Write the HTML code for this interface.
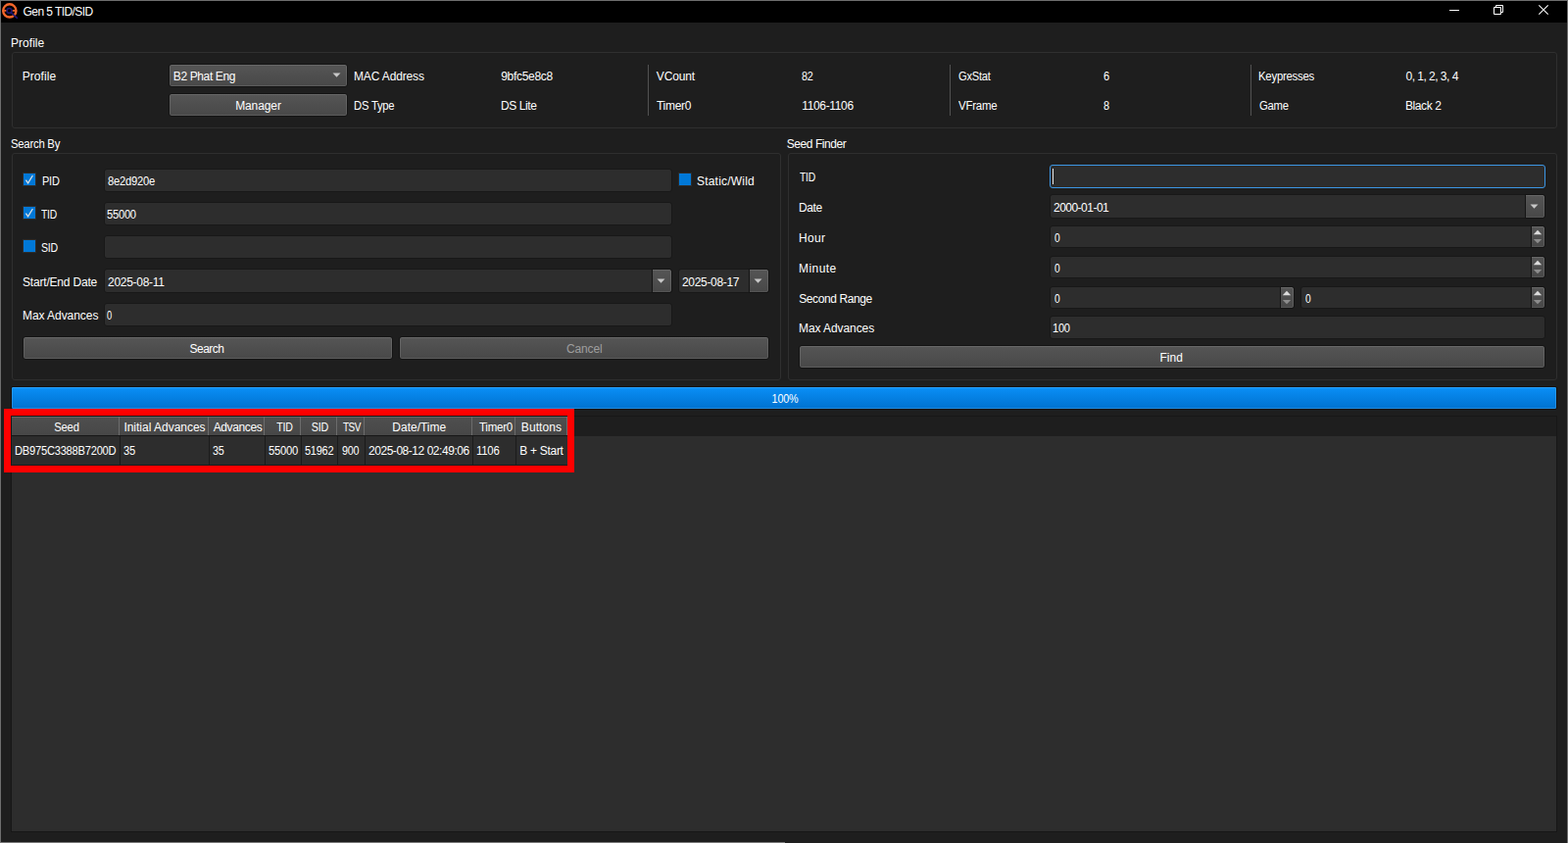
<!DOCTYPE html>
<html lang="en">
<head>
<meta charset="utf-8">
<title>Gen 5 TID/SID</title>
<style>
html,body{margin:0;padding:0;}
body{width:1600px;height:860px;overflow:hidden;background:#1e1e1e;position:relative;
  font-family:"Liberation Sans",sans-serif;font-size:12px;color:#fff;}
#win{position:absolute;left:0;top:0;width:1600px;height:860px;box-sizing:border-box;
  border:1px solid #6e6e6e;border-bottom:none;background:#1e1e1e;}
#titlebar{position:absolute;left:1px;top:1px;width:1598px;height:22px;background:#000;}
.t{position:absolute;height:16px;line-height:16px;white-space:nowrap;margin:0;padding:0;}
.c{text-align:center;}
.grp{position:absolute;box-sizing:border-box;border:1px solid #2f2f2f;border-radius:3px;}
.btn{position:absolute;box-sizing:border-box;height:24px;border:1px solid #141414;border-radius:3px;
  background:linear-gradient(#555555,#484848);box-shadow:inset 0 0 0 1px rgba(255,255,255,0.11);}
.edit{position:absolute;box-sizing:border-box;height:24px;border:1px solid #181818;border-radius:3px;
  background:#2d2d2d;}
.vl{position:absolute;width:1px;background:#525252;}
.cb{position:absolute;box-sizing:border-box;width:14px;height:14px;border:1px solid #2c2c2c;background:#0078d7;}
.sub{position:absolute;box-sizing:border-box;border:1px solid #141414;
  background:linear-gradient(#555555,#484848);box-shadow:inset -1px 0 0 rgba(255,255,255,0.11),inset 0 1px 0 rgba(255,255,255,0.11),inset 0 -1px 0 rgba(255,255,255,0.07);}
svg{position:absolute;overflow:visible;}
</style>
</head>
<body>
<div id="win"></div>
<div id="titlebar"></div>
<div style="position:absolute;left:0;top:859px;width:801px;height:1px;background:#777"></div>

<!-- app icon -->
<svg style="left:1px;top:2px" width="18" height="18" viewBox="0 0 18 18">
  <circle cx="8.8" cy="8.9" r="6.6" fill="none" stroke="#f4652a" stroke-width="2.4"/>
  <path d="M3.2 8.9h2.4M11.6 8.9h2.6" stroke="#f4652a" stroke-width="1.6"/>
  <circle cx="8.5" cy="8.9" r="2.4" fill="none" stroke="#1f1670" stroke-width="1.5"/>
  <path d="M10.4 10.8L16.4 16.3" stroke="#1f1670" stroke-width="1.7" stroke-linecap="round"/>
</svg>
<div class="t" style="left:23.5px;top:4px;letter-spacing:-0.56px">Gen 5 TID/SID</div>

<!-- window controls -->
<svg style="left:1474px;top:1px" width="120" height="22" viewBox="0 0 120 22">
  <path d="M5 9.5h10" stroke="#fff" stroke-width="1"/>
  <path d="M50.5 6.5h7v7h-7zM52.5 6.5v-2h7v7h-2" fill="none" stroke="#fff" stroke-width="1"/>
  <path d="M96.3 4.3l9.4 9.4M105.7 4.3l-9.4 9.4" stroke="#fff" stroke-width="1.1"/>
</svg>

<!-- Profile group -->
<div class="t" style="left:11px;top:36px;letter-spacing:0.04px">Profile</div>
<div class="grp" style="left:12px;top:53px;width:1577px;height:78px"></div>
<div class="t" style="left:22.75px;top:70px;letter-spacing:0.05px">Profile</div>
<div class="btn" style="left:172px;top:65px;width:183px"></div>
<div class="t" style="left:176.75px;top:70px;letter-spacing:-0.37px">B2 Phat Eng</div>
<svg style="left:339px;top:74px" width="9" height="5" viewBox="0 0 9 5"><path d="M0.5 0.5h8L4.5 4.7z" fill="#c8c8c8"/></svg>
<div class="btn" style="left:172px;top:95px;width:183px"></div>
<div class="t c" style="left:172px;top:100px;width:183px;letter-spacing:-0.09px">Manager</div>
<div class="t" style="left:361px;top:70px;letter-spacing:-0.14px">MAC Address</div>
<div class="t" style="left:361px;top:100px;letter-spacing:-0.25px;transform-origin:0 0;transform:scaleX(0.939)">DS Type</div>
<div class="t" style="left:511.25px;top:70px;letter-spacing:-0.31px">9bfc5e8c8</div>
<div class="t" style="left:511px;top:100px;letter-spacing:-0.41px">DS Lite</div>
<div class="vl" style="left:661px;top:66px;height:52px"></div>
<div class="t" style="left:669.75px;top:70px;letter-spacing:-0.12px">VCount</div>
<div class="t" style="left:670px;top:100px;letter-spacing:-0.30px">Timer0</div>
<div class="t" style="left:818.25px;top:70px;letter-spacing:-0.25px;transform-origin:0 0;transform:scaleX(0.900)">82</div>
<div class="t" style="left:818.25px;top:100px;letter-spacing:-0.35px">1106-1106</div>
<div class="vl" style="left:969px;top:66px;height:52px"></div>
<div class="t" style="left:977.5px;top:70px;letter-spacing:-0.25px;transform-origin:0 0;transform:scaleX(0.929)">GxStat</div>
<div class="t" style="left:978px;top:100px;letter-spacing:-0.25px;transform-origin:0 0;transform:scaleX(0.956)">VFrame</div>
<div class="t" style="left:1126.25px;top:70px;transform-origin:0 0;transform:scaleX(0.921)">6</div>
<div class="t" style="left:1126px;top:100px;transform-origin:0 0;transform:scaleX(0.911)">8</div>
<div class="vl" style="left:1276px;top:66px;height:52px"></div>
<div class="t" style="left:1284.25px;top:70px;letter-spacing:-0.25px;transform-origin:0 0;transform:scaleX(0.948)">Keypresses</div>
<div class="t" style="left:1284.5px;top:100px;letter-spacing:-0.25px;transform-origin:0 0;transform:scaleX(0.941)">Game</div>
<div class="t" style="left:1434.5px;top:70px;letter-spacing:-0.52px">0, 1, 2, 3, 4</div>
<div class="t" style="left:1434px;top:100px;letter-spacing:-0.41px">Black 2</div>

<!-- Search By group -->
<div class="t" style="left:11px;top:139px;letter-spacing:-0.25px;transform-origin:0 0;transform:scaleX(0.943)">Search By</div>
<div class="grp" style="left:12px;top:156px;width:785px;height:232px"></div>

<div class="cb" style="left:23px;top:176px"></div>
<svg style="left:23px;top:176px" width="14" height="14" viewBox="0 0 14 14"><path d="M3.4 7.6L5.6 10.8L10.4 3" fill="none" stroke="#e4e4e4" stroke-width="1.2"/></svg>
<div class="t" style="left:42.5px;top:177px;letter-spacing:-0.25px;transform-origin:0 0;transform:scaleX(0.917)">PID</div>
<div class="edit" style="left:106px;top:172px;width:580px"></div>
<div class="t" style="left:109.5px;top:177px;letter-spacing:-0.25px;transform-origin:0 0;transform:scaleX(0.934)">8e2d920e</div>
<div class="cb" style="left:692px;top:176px"></div>
<div class="t" style="left:711px;top:177px;letter-spacing:0.20px">Static/Wild</div>

<div class="cb" style="left:23px;top:210px"></div>
<svg style="left:23px;top:210px" width="14" height="14" viewBox="0 0 14 14"><path d="M3.4 7.6L5.6 10.8L10.4 3" fill="none" stroke="#e4e4e4" stroke-width="1.2"/></svg>
<div class="t" style="left:42px;top:211px;letter-spacing:-0.25px;transform-origin:0 0;transform:scaleX(0.861)">TID</div>
<div class="edit" style="left:106px;top:206px;width:580px"></div>
<div class="t" style="left:109px;top:211px;letter-spacing:-0.25px;transform-origin:0 0;transform:scaleX(0.928)">55000</div>

<div class="cb" style="left:23px;top:244px"></div>
<div class="t" style="left:42px;top:245px;letter-spacing:-0.25px;transform-origin:0 0;transform:scaleX(0.883)">SID</div>
<div class="edit" style="left:106px;top:240px;width:580px"></div>

<div class="t" style="left:23px;top:280px;letter-spacing:-0.19px">Start/End Date</div>
<div class="edit" style="left:106px;top:274px;width:580px;height:25px"></div>
<div class="t" style="left:110px;top:280px;letter-spacing:-0.28px">2025-08-11</div>
<div class="sub" style="left:665px;top:274px;width:21px;height:25px;border-radius:0 3px 3px 0"></div>
<svg style="left:670px;top:284px" width="9" height="5" viewBox="0 0 9 5"><path d="M0.5 0.5h8L4.5 4.7z" fill="#c8c8c8"/></svg>
<div class="edit" style="left:692px;top:274px;width:93px;height:25px"></div>
<div class="t" style="left:696px;top:280px;letter-spacing:-0.33px">2025-08-17</div>
<div class="sub" style="left:764px;top:274px;width:21px;height:25px;border-radius:0 3px 3px 0"></div>
<svg style="left:769px;top:284px" width="9" height="5" viewBox="0 0 9 5"><path d="M0.5 0.5h8L4.5 4.7z" fill="#c8c8c8"/></svg>

<div class="t" style="left:23px;top:314px;letter-spacing:-0.06px">Max Advances</div>
<div class="edit" style="left:106px;top:309px;width:580px"></div>
<div class="t" style="left:109px;top:314px;transform-origin:0 0;transform:scaleX(0.780)">0</div>

<div class="btn" style="left:23px;top:343px;width:378px"></div>
<div class="t c" style="left:22px;top:348px;width:378px;letter-spacing:-0.52px">Search</div>
<div class="btn" style="left:407px;top:343px;width:378px"></div>
<div class="t c" style="left:407.25px;top:348px;width:378px;color:#9e9e9e;letter-spacing:-0.12px">Cancel</div>

<!-- Seed Finder group -->
<div class="t" style="left:802.75px;top:139px;letter-spacing:-0.43px">Seed Finder</div>
<div class="grp" style="left:804px;top:156px;width:785px;height:232px"></div>

<div class="t" style="left:816px;top:173px;letter-spacing:-0.25px;transform-origin:0 0;transform:scaleX(0.863)">TID</div>
<div class="edit" style="left:1071px;top:168px;width:506px;border-color:#3c96e4"></div>
<div class="vl" style="left:1074px;top:172px;height:16px;background:#e8e8e8"></div>

<div class="t" style="left:815px;top:204px;letter-spacing:-0.42px">Date</div>
<div class="edit" style="left:1071px;top:198px;width:506px;height:25px"></div>
<div class="t" style="left:1075px;top:204px;letter-spacing:-0.52px">2000-01-01</div>
<div class="sub" style="left:1556px;top:198px;width:21px;height:25px;border-radius:0 3px 3px 0"></div>
<svg style="left:1561px;top:208px" width="9" height="5" viewBox="0 0 9 5"><path d="M0.5 0.5h8L4.5 4.7z" fill="#c8c8c8"/></svg>

<div class="t" style="left:815px;top:235px;letter-spacing:0.31px">Hour</div>
<div class="edit" style="left:1071px;top:230px;width:506px;height:23px"></div>
<div class="t" style="left:1076px;top:235px;transform-origin:0 0;transform:scaleX(0.850)">0</div>

<div class="t" style="left:815px;top:266px;letter-spacing:0.44px">Minute</div>
<div class="edit" style="left:1071px;top:261px;width:506px;height:23px"></div>
<div class="t" style="left:1076px;top:266px;transform-origin:0 0;transform:scaleX(0.850)">0</div>

<div class="t" style="left:815.25px;top:297px;letter-spacing:-0.41px">Second Range</div>
<div class="edit" style="left:1071px;top:292px;width:250px;height:23px"></div>
<div class="t" style="left:1076px;top:297px;transform-origin:0 0;transform:scaleX(0.850)">0</div>
<div class="edit" style="left:1327px;top:292px;width:250px;height:23px"></div>
<div class="t" style="left:1332px;top:297px;transform-origin:0 0;transform:scaleX(0.850)">0</div>

<div class="sub" style="left:1562px;top:230px;width:15px;height:23px;border-radius:0 3px 3px 0"></div>
<svg style="left:1562px;top:230px" width="15" height="23" viewBox="0 0 15 23"><path d="M2.8 9.3h8.4L7 4.8z" fill="#dcdcdc"/><path d="M2.8 14h8.4L7 18.3z" fill="#8c8c8c"/></svg>
<div class="sub" style="left:1562px;top:261px;width:15px;height:23px;border-radius:0 3px 3px 0"></div>
<svg style="left:1562px;top:261px" width="15" height="23" viewBox="0 0 15 23"><path d="M2.8 9.3h8.4L7 4.8z" fill="#dcdcdc"/><path d="M2.8 14h8.4L7 18.3z" fill="#8c8c8c"/></svg>
<div class="sub" style="left:1306px;top:292px;width:15px;height:23px;border-radius:0 3px 3px 0"></div>
<svg style="left:1306px;top:292px" width="15" height="23" viewBox="0 0 15 23"><path d="M2.8 9.3h8.4L7 4.8z" fill="#dcdcdc"/><path d="M2.8 14h8.4L7 18.3z" fill="#8c8c8c"/></svg>
<div class="sub" style="left:1562px;top:292px;width:15px;height:23px;border-radius:0 3px 3px 0"></div>
<svg style="left:1562px;top:292px" width="15" height="23" viewBox="0 0 15 23"><path d="M2.8 9.3h8.4L7 4.8z" fill="#dcdcdc"/><path d="M2.8 14h8.4L7 18.3z" fill="#8c8c8c"/></svg>
<div class="t" style="left:815px;top:327px;letter-spacing:-0.08px">Max Advances</div>
<div class="edit" style="left:1071px;top:322px;width:506px"></div>
<div class="t" style="left:1073.75px;top:327px;letter-spacing:-0.25px;transform-origin:0 0;transform:scaleX(0.924)">100</div>

<div class="btn" style="left:815px;top:352px;width:762px"></div>
<div class="t c" style="left:814.25px;top:357px;width:762px;letter-spacing:0.05px">Find</div>

<!-- progress bar -->
<div style="position:absolute;left:11px;top:394px;width:1578px;height:24px;box-sizing:border-box;border:1px solid #15110f;border-radius:2px;
  background:linear-gradient(#0a8ff7,#0071ce);box-shadow:inset 0 0 0 1px rgba(120,200,255,0.28)"></div>
<div class="t c" style="left:12.5px;top:399px;width:1576px;letter-spacing:-0.25px;transform-origin:50% 0;transform:scaleX(0.901)">100%</div>

<!-- table -->
<div style="position:absolute;left:11px;top:424px;width:1578px;height:425px;box-sizing:border-box;border:1px solid #171717;background:#2d2d2d"></div>
<div style="position:absolute;left:12px;top:425px;width:1576px;height:20px;background:#1e1e1e"></div>

<div id="hdr" style="position:absolute;left:12px;top:425px;width:567px;height:19px;background:linear-gradient(#4f4f4f,#474747);box-shadow:inset 0 1px 0 #636363"></div>
<div style="position:absolute;left:12px;top:444px;width:567px;height:1px;background:#161616"></div>
<div style="position:absolute;left:12px;top:474px;width:567px;height:1px;background:#1b1b1b"></div>
<div class="t c" style="left:12.75px;top:428px;width:110px;letter-spacing:-0.25px;transform-origin:50% 0;transform:scaleX(0.935)">Seed</div>
<div class="t" style="left:15px;top:452px;letter-spacing:-0.25px;transform-origin:0 0;transform:scaleX(0.928)">DB975C3388B7200D</div>
<div style="position:absolute;left:121px;top:425px;width:1px;height:19px;background:#6c6c6c"></div>
<div style="position:absolute;left:122px;top:445px;width:1px;height:30px;background:#1b1b1b"></div>
<div class="t c" style="left:122.5px;top:428px;width:91px;letter-spacing:-0.01px">Initial Advances</div>
<div class="t" style="left:126px;top:452px;letter-spacing:-0.25px;transform-origin:0 0;transform:scaleX(0.927)">35</div>
<div style="position:absolute;left:212px;top:425px;width:1px;height:19px;background:#6c6c6c"></div>
<div style="position:absolute;left:213px;top:445px;width:1px;height:30px;background:#1b1b1b"></div>
<div class="t c" style="left:214px;top:428px;width:57px;letter-spacing:-0.39px">Advances</div>
<div class="t" style="left:217px;top:452px;letter-spacing:-0.25px;transform-origin:0 0;transform:scaleX(0.900)">35</div>
<div style="position:absolute;left:269px;top:425px;width:1px;height:19px;background:#6c6c6c"></div>
<div style="position:absolute;left:270px;top:445px;width:1px;height:30px;background:#1b1b1b"></div>
<div class="t c" style="left:271.5px;top:428px;width:37px;letter-spacing:-0.25px;transform-origin:50% 0;transform:scaleX(0.881)">TID</div>
<div class="t" style="left:274px;top:452px;letter-spacing:-0.25px;transform-origin:0 0;transform:scaleX(0.936)">55000</div>
<div style="position:absolute;left:306px;top:425px;width:1px;height:19px;background:#6c6c6c"></div>
<div style="position:absolute;left:307px;top:445px;width:1px;height:30px;background:#1b1b1b"></div>
<div class="t c" style="left:308.25px;top:428px;width:37px;letter-spacing:-0.25px;transform-origin:50% 0;transform:scaleX(0.895)">SID</div>
<div class="t" style="left:310.75px;top:452px;letter-spacing:-0.25px;transform-origin:0 0;transform:scaleX(0.914)">51962</div>
<div style="position:absolute;left:343px;top:425px;width:1px;height:19px;background:#6c6c6c"></div>
<div style="position:absolute;left:344px;top:445px;width:1px;height:30px;background:#1b1b1b"></div>
<div class="t c" style="left:344.75px;top:428px;width:28px;letter-spacing:-0.60px;transform-origin:50% 0;transform:scaleX(0.834)">TSV</div>
<div class="t" style="left:348.5px;top:452px;letter-spacing:-0.25px;transform-origin:0 0;transform:scaleX(0.900)">900</div>
<div style="position:absolute;left:371px;top:425px;width:1px;height:19px;background:#6c6c6c"></div>
<div style="position:absolute;left:372px;top:445px;width:1px;height:30px;background:#1b1b1b"></div>
<div class="t c" style="left:372.75px;top:428px;width:110px;letter-spacing:0.00px">Date/Time</div>
<div class="t" style="left:376px;top:452px;letter-spacing:-0.46px">2025-08-12 02:49:06</div>
<div style="position:absolute;left:481px;top:425px;width:1px;height:19px;background:#6c6c6c"></div>
<div style="position:absolute;left:482px;top:445px;width:1px;height:30px;background:#1b1b1b"></div>
<div class="t c" style="left:483.75px;top:428px;width:44px;letter-spacing:-0.25px;transform-origin:50% 0;transform:scaleX(0.960)">Timer0</div>
<div class="t" style="left:485.5px;top:452px;letter-spacing:-0.25px;transform-origin:0 0;transform:scaleX(0.950)">1106</div>
<div style="position:absolute;left:525px;top:425px;width:1px;height:19px;background:#6c6c6c"></div>
<div style="position:absolute;left:526px;top:445px;width:1px;height:30px;background:#1b1b1b"></div>
<div class="t c" style="left:526px;top:428px;width:53px;letter-spacing:0.10px">Buttons</div>
<div class="t" style="left:530.25px;top:452px;letter-spacing:-0.29px">B + Start</div>
<div style="position:absolute;left:578px;top:425px;width:1px;height:19px;background:#6c6c6c"></div>
<div style="position:absolute;left:579px;top:445px;width:1px;height:30px;background:#1b1b1b"></div>
<div id="red" style="position:absolute;left:4px;top:417px;width:582px;height:65px;box-sizing:border-box;border:7px solid #fe0000"></div>

</body>
</html>
